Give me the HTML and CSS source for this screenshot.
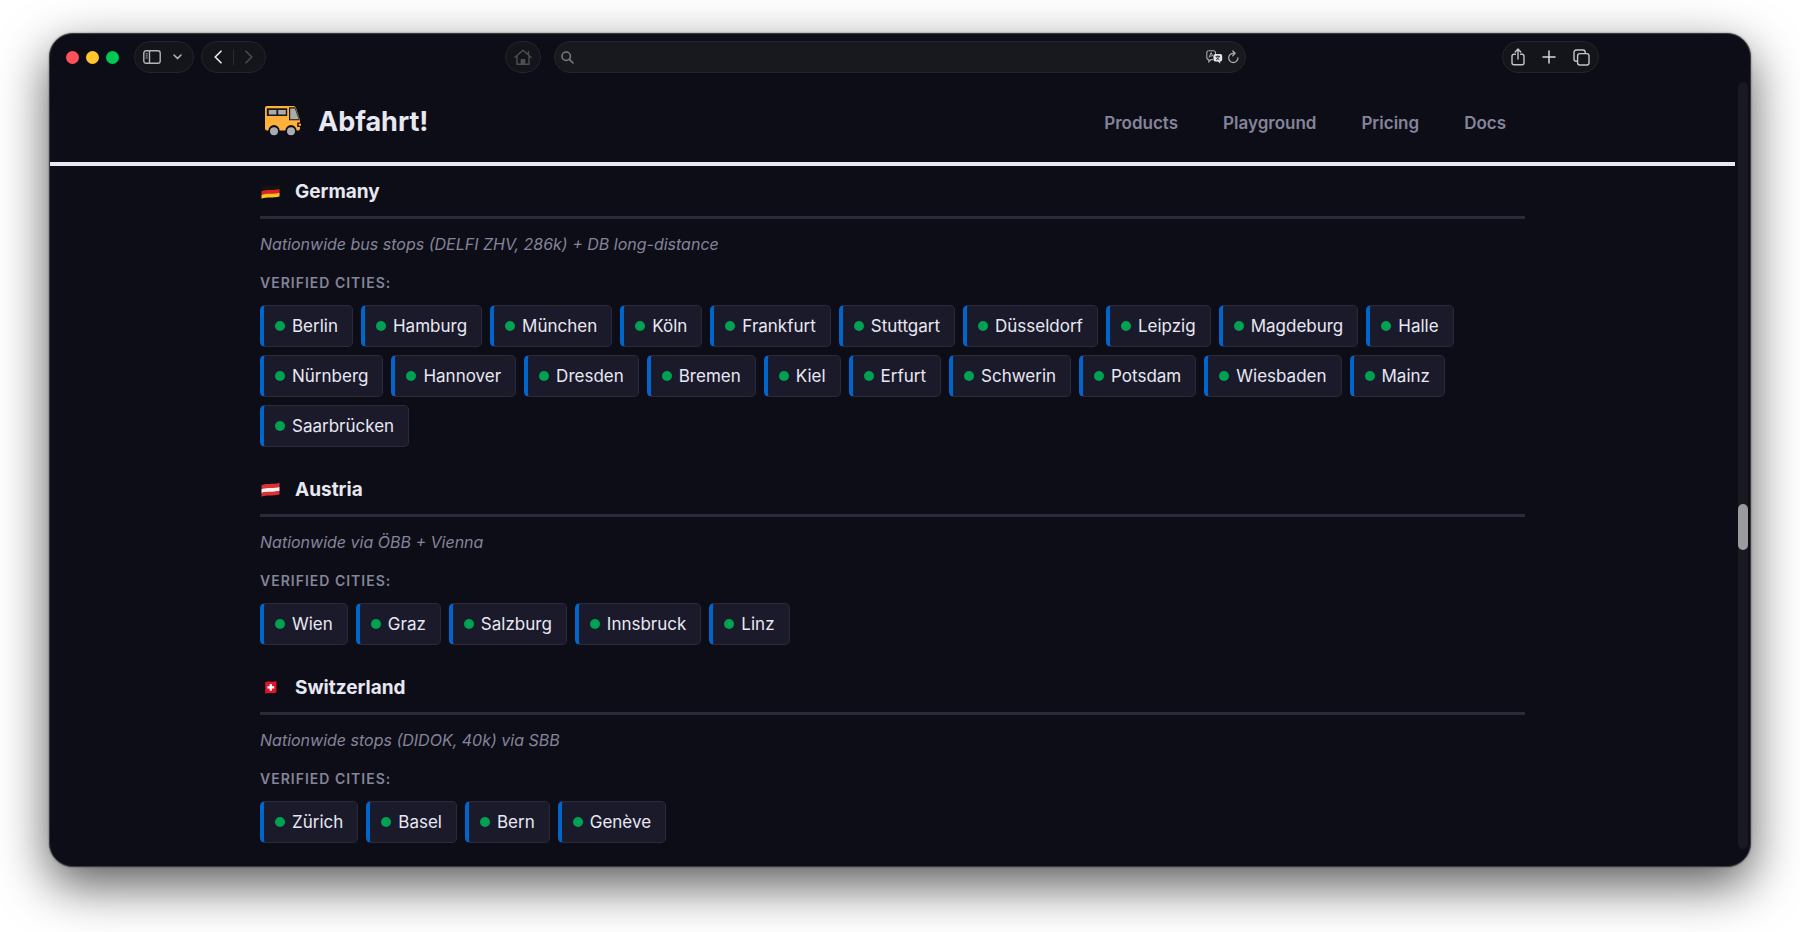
FILE: index.html
```html
<!DOCTYPE html>
<html lang="en">
<head>
  <meta charset="UTF-8">
  <meta name="viewport" content="width=device-width, initial-scale=1">
  <title>Abfahrt!</title>
  <link rel="stylesheet" href="styles.css">
</head>
<body>

<div class="window">

  <div class="toolbar">
    <div class="toolbar-left">
      <div class="lights">
        <span class="light red"></span>
        <span class="light yellow"></span>
        <span class="light green"></span>
      </div>
      <div class="pill pill-sidebar">
        <button aria-label="Sidebar">
          <svg width="18" height="14" viewBox="0 0 18 14" fill="none" stroke="#b4b4b8" stroke-width="1.4"><rect x="0.8" y="0.8" width="16.4" height="12.4" rx="2.2"/><path d="M6.5 1v12"/><path d="M2.7 3.8h2M2.7 5.9h2M2.7 8h2" stroke-width="1"/></svg>
        </button>
        <button aria-label="Tab groups">
          <svg width="9" height="6" viewBox="0 0 9 6" fill="none" stroke="#b4b4b8" stroke-width="1.5" stroke-linecap="round" stroke-linejoin="round"><path d="M1 1l3.5 3.6L8 1"/></svg>
        </button>
      </div>
      <div class="pill pill-history">
        <button aria-label="Back">
          <svg width="8" height="14" viewBox="0 0 8 14" fill="none" stroke="#ececf0" stroke-width="1.6" stroke-linecap="round" stroke-linejoin="round"><path d="M7 1.2L1.2 7 7 12.8"/></svg>
        </button>
        <span class="divider"></span>
        <button aria-label="Forward">
          <svg width="8" height="14" viewBox="0 0 8 14" fill="none" stroke="#4b4b52" stroke-width="1.6" stroke-linecap="round" stroke-linejoin="round"><path d="M1 1.2L6.8 7 1 12.8"/></svg>
        </button>
      </div>
      <button class="pill home" aria-label="Home">
        <svg width="18" height="17" viewBox="0 0 18 17" fill="none" stroke="#4d4d53" stroke-width="1.4" stroke-linecap="round" stroke-linejoin="round"><path d="M1 8.2L9 1.2l8 7M3 7v8.2h12V7M14.4 5.6V2.6"/><path d="M7.4 10.6h3.2v4.6H7.4z" fill="#4d4d53"/></svg>
      </button>
    </div>

    <div class="pill search">
      <svg width="13" height="13" viewBox="0 0 13 13" fill="none" stroke="#77777d" stroke-width="1.6" stroke-linecap="round"><circle cx="5.2" cy="5.2" r="4.2"/><path d="M8.4 8.4l3.6 3.6"/></svg>
      <input type="text" aria-label="Address">
      <button aria-label="Translate">
        <svg width="17" height="14" viewBox="0 0 17 14"><path d="M3 .8h4.5a2 2 0 0 1 2 2v1.7M6.8 9.6H4.9L2.8 11.8V9.5a2 2 0 0 1-2-2V2.8a2 2 0 0 1 2-2" fill="none" stroke="#a9a9ae" stroke-width="1.1"/><path d="M3 7.6l2.1-5 1.6 3.6M3.7 6h2.5" fill="none" stroke="#a9a9ae" stroke-width="1"/><path d="M9.4 4h4.8a2 2 0 0 1 2 2v3.4a2 2 0 0 1-2 2v2.2l-2.3-2.2H9.4a2 2 0 0 1-2-2V6a2 2 0 0 1 2-2z" fill="#e4e4e8"/><path d="M9.6 6.4h4.4M11.8 5.4v1M13.2 6.6c-.4 1.6-1.6 2.6-3.2 3.2M10.4 6.8c.6 1.4 1.6 2.4 3 3" fill="none" stroke="#18181f" stroke-width=".8"/></svg>
      </button>
      <button aria-label="Reload">
        <svg width="11" height="14" viewBox="0 0 11 14" fill="none" stroke="#a9a9ae" stroke-width="1.3" stroke-linecap="round" stroke-linejoin="round"><path d="M9.9 7.800a4.600 4.600 0 1 1-4.400-4.500h1M4.800 1l2.300 2.300-2.300 2.400"/></svg>
      </button>
    </div>

    <div class="toolbar-right">
      <div class="pill pill-actions">
        <button aria-label="Share">
          <svg width="14" height="18" viewBox="0 0 14 18" fill="none" stroke="#c4c4c8" stroke-width="1.4" stroke-linecap="round" stroke-linejoin="round"><path d="M4.4 6.2H3A2 2 0 0 0 1 8.200v6.600a2 2 0 0 0 2 2h8a2 2 0 0 0 2-2V8.200a2 2 0 0 0-2-2H9.600M7 11V1.200M4.200 3.900L7 1.100l2.800 2.800"/></svg>
        </button>
        <button aria-label="New tab">
          <svg width="14" height="14" viewBox="0 0 14 14" fill="none" stroke="#d8d8dc" stroke-width="1.5" stroke-linecap="round"><path d="M7 1v12M1 7h12"/></svg>
        </button>
        <button aria-label="Tab overview">
          <svg width="17" height="17" viewBox="0 0 17 17" fill="none" stroke="#c4c4c8" stroke-width="1.4" stroke-linejoin="round"><rect x="4.600" y="4.600" width="11.400" height="11.400" rx="2.200"/><path d="M4.400 12.200H3.200A2.200 2.200 0 0 1 1 10V3.200A2.200 2.200 0 0 1 3.200 1H10a2.200 2.200 0 0 1 2.200 2.200v1.200"/></svg>
        </button>
      </div>
    </div>
  </div>

  <header class="header">
    <div class="header-inner">
      <a href="#" class="logo">
        <svg width="38" height="32" viewBox="0 0 38 32">
          <path d="M1 3a2 2 0 0 1 2-2h26.500a2.500 2.500 0 0 1 2.400 1.800L36 15v8.500a2 2 0 0 1-2 2H3a2 2 0 0 1-2-2z" fill="#ffb13b"/>
          <path d="M2.800 3.300h20.400v7.800H2.800z" fill="#1b1712"/>
          <path d="M4.800 4.900h7.600v4.600H4.800zM14.200 4.900h7.600v4.600h-7.600z" fill="#a9abad"/>
          <path d="M25 2.300h6.200l4.600 12.900H25z" fill="#1b1712"/>
          <path d="M26.200 3.400h4.600l4 10.800h-8.600z" fill="#a9abad"/>
          <path d="M33.200 17.600H37v4.400h-3.800z" fill="#1b1712"/>
          <path d="M34.800 18.800H37v2h-2.200z" fill="#ffb13b"/>
          <circle cx="10" cy="25.600" r="5.600" fill="#0d0d17"/>
          <circle cx="27" cy="25.600" r="5.600" fill="#0d0d17"/>
          <circle cx="10" cy="26.200" r="4" fill="#a9abad"/>
          <circle cx="27" cy="26.200" r="4" fill="#a9abad"/>
        </svg>
        <span>Abfahrt!</span>
      </a>
      <nav class="nav">
        <a href="#">Products</a>
        <a href="#">Playground</a>
        <a href="#">Pricing</a>
        <a href="#">Docs</a>
      </nav>
    </div>
  </header>

  <main class="content">

    <section class="country">
      <h3>
        <svg class="flag" width="21" height="16" viewBox="0 0 21 16">
          <path d="M1.500 3.300C7 .800 13 3 19.500.800v4.400C13 7.200 7 5 1.500 7.400z" fill="#17130f"/>
          <path d="M1.500 7.200C7 4.700 13 7 19.500 4.900v4.200C13 11.200 7 8.900 1.500 11.300z" fill="#e0241c"/>
          <path d="M1.500 11.100C7 8.600 13 10.900 19.500 8.800v3.700C13 14.500 7 12.400 1.500 14.700z" fill="#f6c425"/>
        </svg>
        Germany
      </h3>
      <p class="note">Nationwide bus stops (DELFI ZHV, 286k) + DB long-distance</p>
      <h4>Verified cities:</h4>
      <ul class="cities">
        <li>Berlin</li>
        <li>Hamburg</li>
        <li>München</li>
        <li>Köln</li>
        <li>Frankfurt</li>
        <li>Stuttgart</li>
        <li>Düsseldorf</li>
        <li>Leipzig</li>
        <li>Magdeburg</li>
        <li>Halle</li>
        <li>Nürnberg</li>
        <li>Hannover</li>
        <li>Dresden</li>
        <li>Bremen</li>
        <li>Kiel</li>
        <li>Erfurt</li>
        <li>Schwerin</li>
        <li>Potsdam</li>
        <li>Wiesbaden</li>
        <li>Mainz</li>
        <li>Saarbrücken</li>
      </ul>
    </section>

    <section class="country">
      <h3>
        <svg class="flag" width="21" height="16" viewBox="0 0 21 16">
          <path d="M1.500 3.300C7 .800 13 3 19.500.800v4.400C13 7.200 7 5 1.500 7.400z" fill="#dc2f36"/>
          <path d="M1.500 7.200C7 4.700 13 7 19.500 4.900v4.200C13 11.200 7 8.900 1.500 11.300z" fill="#f4eeee"/>
          <path d="M1.500 11.100C7 8.600 13 10.900 19.500 8.800v3.700C13 14.500 7 12.400 1.500 14.700z" fill="#dc2f36"/>
        </svg>
        Austria
      </h3>
      <p class="note">Nationwide via ÖBB + Vienna</p>
      <h4>Verified cities:</h4>
      <ul class="cities">
        <li>Wien</li>
        <li>Graz</li>
        <li>Salzburg</li>
        <li>Innsbruck</li>
        <li>Linz</li>
      </ul>
    </section>

    <section class="country">
      <h3>
        <svg class="flag" width="21" height="16" viewBox="0 0 21 16">
          <path d="M5.200 2.200C9 .800 12.500 2.500 16.400 1v11.400C12.500 14 9 12.300 5.200 13.800z" fill="#e0142c"/>
          <path d="M9.700 4.100h2.200v2.200h2.300v2.200h-2.300v2.300H9.700V8.500H7.400V6.300h2.300z" fill="#fff"/>
        </svg>
        Switzerland
      </h3>
      <p class="note">Nationwide stops (DIDOK, 40k) via SBB</p>
      <h4>Verified cities:</h4>
      <ul class="cities">
        <li>Zürich</li>
        <li>Basel</li>
        <li>Bern</li>
        <li>Genève</li>
      </ul>
    </section>

  </main>

  <div class="scrollbar"><div class="thumb"></div></div>

</div>

</body>
</html>
```
FILE: styles.css
```css
* {
  box-sizing: border-box;
}

body {
  margin: 0;
  height: 100vh;
  padding: 33px 49px 65px;
  background: #fff;
  color: #e8e8f2;
  font-family: Inter, "Liberation Sans", sans-serif;
  font-size: 17px;
  overflow: hidden;
}

a {
  color: inherit;
  text-decoration: none;
}

button {
  display: flex;
  align-items: center;
  justify-content: center;
  padding: 0;
  border: none;
  background: none;
}

.window {
  position: relative;
  height: 100%;
  overflow: hidden;
  border: 1px solid #3a3a3f;
  border-radius: 24px;
  background: #0d0d17;
  box-shadow: 0 0 2px rgba(0, 0, 0, 0.5), 0 18px 50px rgba(0, 0, 0, 0.65);
}

/* browser toolbar */
.toolbar {
  display: grid;
  grid-template-columns: 1fr minmax(0, 692px) 1fr;
  align-items: center;
  height: 46px;
}

.toolbar-left {
  display: flex;
  align-items: center;
  padding: 0 13px 0 16px;
}

.lights {
  display: flex;
  gap: 7px;
  margin-right: 15px;
}

.light {
  width: 13px;
  height: 13px;
  border-radius: 50%;
}

.red { background: #ff5159; }
.yellow { background: #ffc62d; }
.green { background: #00c853; }

.pill {
  display: flex;
  align-items: center;
  height: 32px;
  border: 1px solid #24242b;
  border-radius: 16px;
  background: #14141b;
}

.pill-sidebar {
  width: 60px;
  padding: 0 11px 0 8px;
  justify-content: space-between;
  margin-right: 7px;
}

.pill-history {
  width: 65px;
  padding: 0 12px;
  justify-content: space-between;
}

.divider {
  width: 1px;
  height: 16px;
  background: #2a2a31;
}

.home {
  width: 36px;
  margin-left: auto;
}

.search {
  padding: 0 6px;
  gap: 5px;
  background: #18181f;
}

.search input {
  flex: 1;
  min-width: 0;
  border: none;
  outline: none;
  background: none;
  color: #e8e8f2;
}

.toolbar-right {
  display: flex;
  justify-content: flex-end;
  padding-right: 151px;
}

.pill-actions {
  width: 97px;
  padding: 0 8px;
  justify-content: space-between;
}

/* site header */
.header {
  margin-right: 15px;
  border-bottom: 4px solid #e8e8f2;
}

.header-inner {
  display: flex;
  align-items: center;
  justify-content: space-between;
  max-width: 1265px;
  height: 82px;
  margin: 0 auto;
  padding: 0 19px 0 4px;
}

.logo {
  display: flex;
  align-items: center;
  gap: 16px;
  font-size: 27px;
  font-weight: 700;
}

.nav {
  display: flex;
  gap: 45px;
  padding-top: 3px;
  color: #84849a;
  font-weight: 600;
}

/* countries */
.content {
  max-width: 1280px;
  margin: 0 auto;
  padding: 8px 15px 0 0;
}

.country {
  margin-bottom: 25px;
}

.country h3 {
  display: flex;
  align-items: center;
  gap: 14px;
  margin: 0 0 13px;
  padding-bottom: 6px;
  border-bottom: 3px solid #2a2a3a;
  font-size: 19px;
  line-height: 36px;
  font-weight: 700;
}

.note {
  margin: 0 0 17px;
  color: #84849a;
  font-size: 16px;
  line-height: 24px;
  font-style: italic;
}

.country h4 {
  margin: 0 0 12px;
  color: #84849a;
  font-size: 14px;
  line-height: 20px;
  font-weight: 600;
  letter-spacing: 1px;
  text-transform: uppercase;
}

.cities {
  display: flex;
  flex-wrap: wrap;
  gap: 8px;
  margin: 0;
  padding: 0;
  list-style: none;
}

.cities li {
  display: flex;
  align-items: center;
  gap: 7px;
  height: 42px;
  padding: 0 14px 0 11px;
  border: 1px solid #2a2a3a;
  border-left: 4px solid #0066cc;
  border-radius: 5px;
  background: #1a1a2b;
}

.cities li::before {
  content: "";
  width: 10px;
  height: 10px;
  border-radius: 50%;
  background: #00a152;
}

.scrollbar {
  position: absolute;
  top: 48px;
  right: 2px;
  bottom: 17px;
  width: 10px;
  border-radius: 5px;
  background: #191922;
}

.thumb {
  height: 6%;
  margin-top: 422px;
  border-radius: 5px;
  background: #9b9b9e;
}
```
